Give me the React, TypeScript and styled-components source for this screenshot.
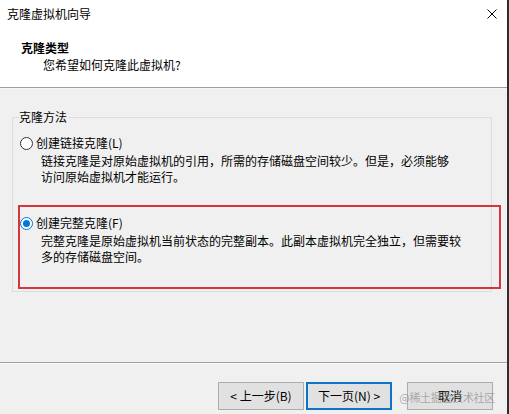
import React from "react";
import styled, { createGlobalStyle } from "styled-components";

const Global = createGlobalStyle`
  html, body { margin: 0; padding: 0; background: #f0f0f0; }
  body { font-family: "Noto Sans CJK SC", "Microsoft YaHei", sans-serif; font-size: 12px; color: #000; }
  * { box-sizing: border-box; }
`;

const Window = styled.div`
  width: 509px;
  height: 414px;
  display: flex;
  flex-direction: column;
  border-right: 2px solid #2e2e2e;
  background: #f0f0f0;
  overflow: hidden;
`;

const Header = styled.header`
  height: 88px;
  background: #fff;
  display: flex;
  flex-direction: column;
  border-bottom: 1px solid #a0a0a0;
  flex: none;
`;

const TitleBar = styled.div`
  height: 28px;
  display: flex;
  align-items: center;
  justify-content: space-between;
  padding: 0 10px 0 7px;
`;

const Title = styled.span`
  font-size: 12px;
  line-height: 16px;
`;

const CloseIcon = styled.svg`
  width: 10px;
  height: 10px;
  display: block;
`;

const Heading = styled.div`
  margin: 12px 0 0 21px;
  font-weight: bold;
  font-size: 12px;
  line-height: 16px;
`;

const SubHeading = styled.div`
  margin: 1px 0 0 43px;
  font-size: 12px;
  line-height: 16px;
`;

const Body = styled.main`
  flex: 1;
  display: flex;
  flex-direction: column;
  padding: 21px 0 0 12px;
  border-top: 1px solid #f7f7f7;
`;

const Group = styled.fieldset`
  margin: 0;
  width: 480px;
  height: 182px;
  padding: 0 6px 0 7px;
  border: 1px solid #dcdcdc;
  display: flex;
  flex-direction: column;
`;

const Legend = styled.legend`
  padding: 0 2px 0 0;
  margin-left: -1px;
  font-size: 12px;
  line-height: 14px;
`;

const Option = styled.div<{ $top: number }>`
  position: relative;
  margin-top: ${(p) => p.$top}px;
  display: flex;
  flex-direction: column;
`;

const OptionRow = styled.label`
  display: flex;
  align-items: center;
  gap: 3px;
  line-height: 16px;
  font-size: 12px;
`;

const Radio = styled.span<{ $checked?: boolean }>`
  width: 13px;
  height: 13px;
  border-radius: 50%;
  border: 1px solid ${(p) => (p.$checked ? "#0078d7" : "#333")};
  background: #fff;
  display: flex;
  align-items: center;
  justify-content: center;
  flex: none;
  &::after {
    content: "";
    width: 7px;
    height: 7px;
    border-radius: 50%;
    background: ${(p) => (p.$checked ? "#0078d7" : "transparent")};
  }
`;

const Desc = styled.div`
  margin: 2px 0 0 21px;
  font-size: 12px;
  line-height: 16px;
  width: 420px;
`;

const Highlight = styled.div`
  position: absolute;
  left: -2px;
  top: -10px;
  width: 483px;
  height: 84px;
  border: 2px solid #d5363d;
  pointer-events: none;
`;

const Footer = styled.footer`
  flex: none;
  border-top: 1px solid #a0a0a0;
  box-shadow: inset 0 1px 0 #f9f9f9;
  height: 52px;
  display: flex;
  justify-content: flex-end;
  align-items: flex-start;
  padding: 19px 14px 0 0;
  position: relative;
`;

const Button = styled.button<{ $primary?: boolean; $gap?: number }>`
  width: 86px;
  height: 28px;
  margin-left: ${(p) => p.$gap ?? 0}px;
  background: #e1e1e1;
  border: ${(p) => (p.$primary ? "2px solid #0f73c9" : "1px solid #adadad")};
  font-family: inherit;
  font-size: 12px;
  line-height: 16px;
  color: #000;
  padding: 0;
`;

const Watermark = styled.span`
  position: absolute;
  right: 12px;
  top: 27px;
  font-size: 11px;
  line-height: 14px;
  color: rgba(140, 140, 140, 0.7);
  pointer-events: none;
  letter-spacing: -0.3px;
`;

export default function App() {
  return (
    <>
      <Global />
      <Window>
        <Header>
          <TitleBar>
            <Title>克隆虚拟机向导</Title>
            <CloseIcon viewBox="0 0 10 10">
              <path d="M0.5 0.5 L9.5 9.5 M9.5 0.5 L0.5 9.5" stroke="#000" strokeWidth="1" fill="none" />
            </CloseIcon>
          </TitleBar>
          <Heading>克隆类型</Heading>
          <SubHeading>您希望如何克隆此虚拟机?</SubHeading>
        </Header>
        <Body>
          <Group>
            <Legend>克隆方法</Legend>
            <Option $top={11}>
              <OptionRow>
                <Radio />
                创建链接克隆(L)
              </OptionRow>
              <Desc>
                链接克隆是对原始虚拟机的引用，所需的存储磁盘空间较少。但是，必须能够
                <br />
                访问原始虚拟机才能运行。
              </Desc>
            </Option>
            <Option $top={30}>
              <Highlight />
              <OptionRow>
                <Radio $checked />
                创建完整克隆(F)
              </OptionRow>
              <Desc>
                完整克隆是原始虚拟机当前状态的完整副本。此副本虚拟机完全独立，但需要较
                <br />
                多的存储磁盘空间。
              </Desc>
            </Option>
          </Group>
        </Body>
        <Footer>
          <Button>&lt; 上一步(B)</Button>
          <Button $primary $gap={2}>下一页(N) &gt;</Button>
          <Button $gap={15}>取消</Button>
          <Watermark>@稀土掘金技术社区</Watermark>
        </Footer>
      </Window>
    </>
  );
}
